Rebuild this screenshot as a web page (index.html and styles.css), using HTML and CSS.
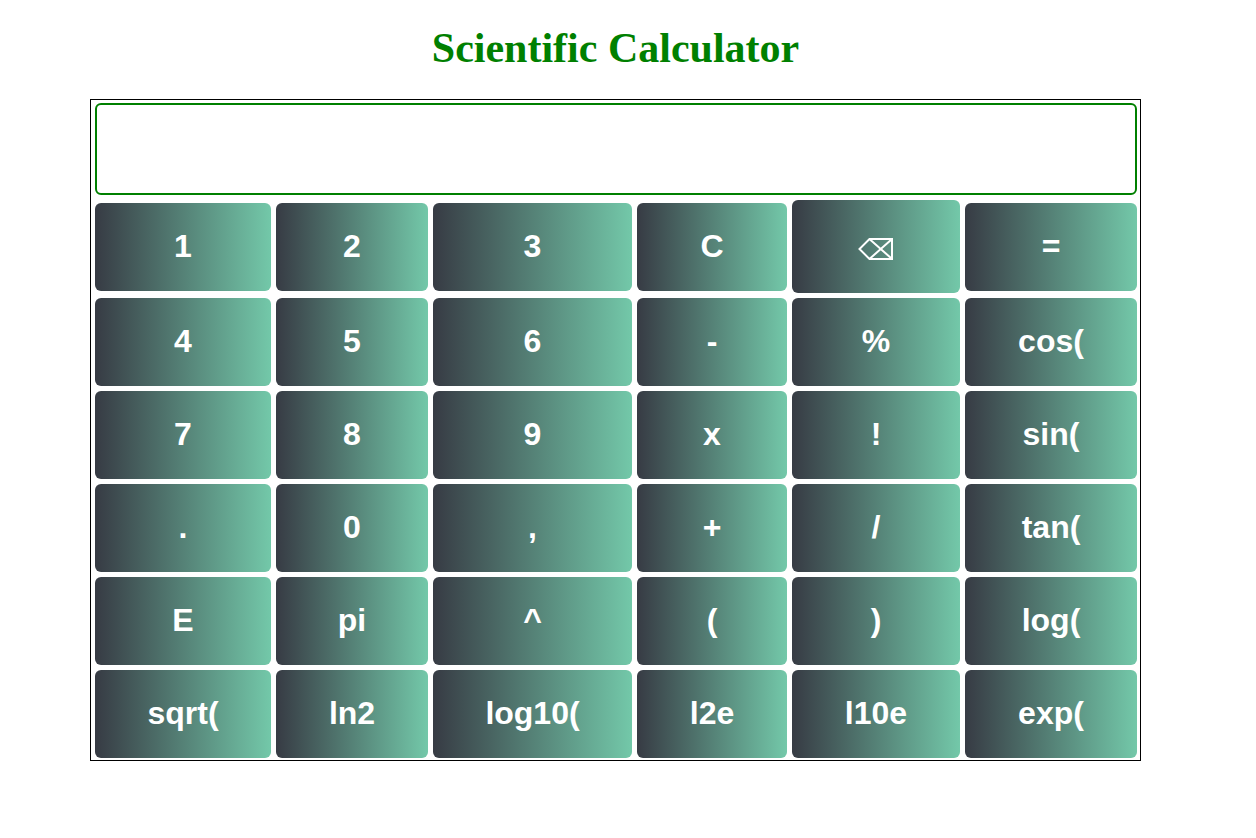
FILE: index.html
```html
<!DOCTYPE html>
<html lang="en">
<head>
<meta charset="utf-8">
<title>Scientific Calculator</title>
<link rel="stylesheet" href="styles.css">
</head>
<body>
<main class="page">
  <h1 class="title">Scientific Calculator</h1>
  <form class="calculator">
    <input class="display" type="text" aria-label="Result">
    <div class="keys">
      <button class="key" type="button">1</button>
      <button class="key" type="button">2</button>
      <button class="key" type="button">3</button>
      <button class="key" type="button">C</button>
      <button class="key key-tall" type="button" aria-label="Backspace"><svg class="erase" viewBox="0 0 36 22" aria-hidden="true"><path d="M11.5 1H34V21H11.5L1.5 11ZM12 1.5L33.5 20.5M33.5 1.5L12 20.5"/></svg></button>
      <button class="key" type="button">=</button>
      <button class="key" type="button">4</button>
      <button class="key" type="button">5</button>
      <button class="key" type="button">6</button>
      <button class="key" type="button">-</button>
      <button class="key" type="button">%</button>
      <button class="key" type="button">cos(</button>
      <button class="key" type="button">7</button>
      <button class="key" type="button">8</button>
      <button class="key" type="button">9</button>
      <button class="key" type="button">x</button>
      <button class="key" type="button">!</button>
      <button class="key" type="button">sin(</button>
      <button class="key" type="button">.</button>
      <button class="key" type="button">0</button>
      <button class="key" type="button">,</button>
      <button class="key" type="button">+</button>
      <button class="key" type="button">/</button>
      <button class="key" type="button">tan(</button>
      <button class="key" type="button">E</button>
      <button class="key" type="button">pi</button>
      <button class="key" type="button">^</button>
      <button class="key" type="button">(</button>
      <button class="key" type="button">)</button>
      <button class="key" type="button">log(</button>
      <button class="key" type="button">sqrt(</button>
      <button class="key" type="button">ln2</button>
      <button class="key" type="button">log10(</button>
      <button class="key" type="button">l2e</button>
      <button class="key" type="button">l10e</button>
      <button class="key" type="button">exp(</button>
    </div>
  </form>
</main>
</body>
</html>
```

FILE: styles.css
```css
* {
  box-sizing: border-box;
}

body {
  margin: 0;
  background: #fff;
}

.page {
  padding: 24px 115px 24px 90px;
}

.title {
  margin: 0 0 27px;
  color: green;
  font: bold 42px/48px "Liberation Serif", "Times New Roman", serif;
  text-align: center;
}

.calculator {
  display: flex;
  flex-direction: column;
  gap: 5px;
  padding: 3px 3px 2px 4px;
  border: 1px solid #000;
}

.display {
  width: 100%;
  height: 92px;
  padding: 0 16px;
  border: 2px solid green;
  border-radius: 6px;
  background: #fff;
  font: bold 32px "Liberation Sans", Arial, sans-serif;
}

.keys {
  display: grid;
  grid-template-columns: 176fr 152fr 199fr 150fr 168fr 172fr;
  gap: 5px;
  align-items: center;
}

.key {
  min-width: 0;
  height: 88px;
  padding: 0 0 1px;
  border: 0;
  border-radius: 6px;
  background: linear-gradient(to right, #373b44, #73c8a9);
  color: #fff;
  font: bold 32px "Liberation Sans", Arial, sans-serif;
}

.key-tall {
  height: 93px;
}

.erase {
  display: block;
  width: 36px;
  height: 22px;
  margin: 5px auto 0;
  fill: none;
  stroke: #fff;
  stroke-width: 2;
}
```
